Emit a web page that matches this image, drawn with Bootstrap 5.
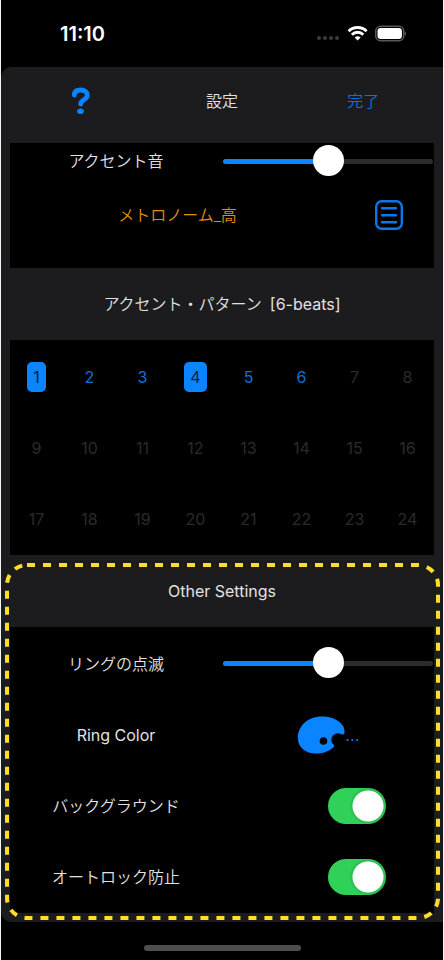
<!DOCTYPE html>
<html lang="ja">
<head>
<meta charset="utf-8">
<meta name="viewport" content="width=device-width, initial-scale=1">
<title>設定</title>
<link href="https://cdn.jsdelivr.net/npm/bootstrap@5.3.0/dist/css/bootstrap.min.css" rel="stylesheet">
<style>
  :root { --tint: #0a84ff; --tint-dim: #0873dd; --sheet: #1c1c1e; --ink: #e2e2e2; }
  body { background: #f4f4f4; font: 400 16px/24px Inter, "Noto Sans CJK JP", sans-serif; color: var(--ink); }
  :lang(ja).jp { font-weight: 350; }
  .phone { background: #000; margin: 0 1px; }
  .status-bar { height: 67px; padding: 0 37px 0 59px; }
  .clock { font-size: 20px; font-weight: 600; color: #fff; }
  .sheet { background: var(--sheet); border-radius: 10px 0 0 10px; padding: 0 9px 9px; }
  .sheet-head { min-height: 68px; margin-bottom: 8px; }
  .panel { background: #000; }
  .panel-accent { padding-bottom: 17px; }
  .line { min-height: 72px; }
  .line-short { min-height: 36px; }
  .section-title { font: inherit; min-height: 72px; }
  .tone-line { grid-template-columns: 79fr 21fr; }
  .tone { color: #e08e0b; }
  .plain { background: none; border: 0; padding: 0; color: var(--tint-dim); line-height: 24px; }
  .beats { grid-template-columns: repeat(8, 1fr); }
  .beats, .panel-others { padding: 1px 0; }
  .beats .line, .panel-others .line { min-height: 71px; }
  .beats .plain:disabled { color: #2b2b2c; }
  .beats .chosen { background: var(--tint); color: #06213f; border-radius: 5px; padding: 3px 6px; }
  .slider { height: 31px; padding: 0 1px; }
  .slider::-webkit-slider-runnable-track { height: 5px; border-radius: 3px; background: linear-gradient(90deg, var(--tint) 50%, #2c2c2e 50%); }
  .slider::-webkit-slider-thumb { width: 31px; height: 31px; margin-top: -14px; background: #fff; border: 0; box-shadow: none; }
  .slider::-moz-range-thumb { width: 31px; height: 31px; background: #fff; border: 0; }
  .toggle-cell { padding-left: 58px; }
  .form-switch .toggle, .form-switch .toggle:checked, .form-switch .toggle:focus {
    width: 58px; height: 36px; margin: 0; border: 0; border-radius: 18px; background-color: #30d158;
    background-image: radial-gradient(circle at 40px 18px, #fff 15px, #2bbd4f 16px, transparent 19px); background-position: 0 0; background-size: 100% 100%;
  }
  .highlight { top: 10px; left: 6px; width: calc(100% - 11px); height: calc(100% - 14px); overflow: visible; pointer-events: none; }
  .others { margin: 0 -9px -9px; padding: 0 9px 9px; }
  .home-area { padding: 23px 0 9px; }
  .home-bar { width: 157px; height: 6px; background: #4d4d4d; border-radius: 3px; }
</style>
<script src="https://cdn.jsdelivr.net/npm/bootstrap@5.3.0/dist/js/bootstrap.bundle.min.js"></script>
</head>
<body>
<div class="phone">
  <div class="status-bar d-flex align-items-center justify-content-between">
    <span class="clock">11:10</span>
    <svg width="90" height="18" viewBox="0 0 90 18" aria-label="Wi-Fi, battery">
      <g fill="#3c3c3d"><circle cx="3" cy="13" r="2"/><circle cx="9" cy="13" r="2"/><circle cx="15" cy="13" r="2"/><circle cx="21" cy="13" r="2"/></g>
      <g fill="none" stroke="#fff" stroke-width="2.900"><path d="M32.600 6.200a12.800 12.800 0 0 1 18 0"/><path d="M35.900 9.700a8 8 0 0 1 11.400 0"/></g>
      <path d="M41.600 15.500l-3-2.900a4.300 4.300 0 0 1 6 0z" fill="#fff"/>
      <rect x="59.700" y="1.300" width="28" height="14.400" rx="4.800" fill="#000" stroke="#59595a" stroke-width="1.500"/>
      <rect x="61.500" y="3.100" width="24.400" height="10.800" rx="3.200" fill="#fff"/>
      <path d="M88.600 6.300q1.600.6 1.600 2.200t-1.600 2.200z" fill="#59595a"/>
    </svg>
  </div>

  <main class="sheet">
    <header class="sheet-head row g-0 align-items-center text-center">
      <div class="col-4 d-flex justify-content-center">
        <button type="button" class="plain" aria-label="ヘルプ">
          <svg class="d-block" width="20" height="28" viewBox="0 0 20 28">
            <path d="M3.300 8C3.500 4.700 6 3 9.700 3c3.900 0 6.600 1.900 6.600 5 0 2.400-1.400 3.500-3.300 4.700-2 1.300-3.300 2.100-3.300 4.200v.2" fill="none" stroke="#0a84ff" stroke-width="4.800" stroke-linecap="round" stroke-linejoin="round"/>
            <ellipse cx="9.500" cy="24.200" rx="3.300" ry="2.800" fill="#0a84ff"/>
          </svg>
        </button>
      </div>
      <h1 class="jp col-4 fs-6 lh-base m-0">設定</h1>
      <div class="col-4"><button type="button" class="plain jp">完了</button></div>
    </header>

    <section class="panel panel-accent">
      <div class="row g-0 line-short align-items-center">
        <label class="jp col-6 text-center" for="accent">アクセント音</label>
        <div class="col-6 d-flex"><input class="form-range slider" type="range" id="accent" min="0" max="100" value="50"></div>
      </div>
      <div class="d-grid tone-line line align-items-center">
        <span class="jp tone text-center">メトロノーム_高</span>
        <button type="button" class="plain d-flex justify-content-center" aria-label="音の一覧">
          <svg width="28" height="30" viewBox="0 0 28 30" fill="none" stroke="#0a78e8" stroke-width="2.400" stroke-linecap="round">
            <rect x="1.200" y="1.200" width="25.600" height="27.600" rx="5.500"/><path d="M7 8.300h14M7 15.300h14M7 22.200h14"/>
          </svg>
        </button>
      </div>
    </section>

    <h2 class="section-title m-0 d-flex align-items-center justify-content-center gap-2"><span class="jp">アクセント・パターン</span><span>[6-beats]</span></h2>

    <section class="panel beats d-grid">
      <div class="line d-flex align-items-center justify-content-center"><button type="button" class="plain chosen">1</button></div>
      <div class="line d-flex align-items-center justify-content-center"><button type="button" class="plain">2</button></div>
      <div class="line d-flex align-items-center justify-content-center"><button type="button" class="plain">3</button></div>
      <div class="line d-flex align-items-center justify-content-center"><button type="button" class="plain chosen">4</button></div>
      <div class="line d-flex align-items-center justify-content-center"><button type="button" class="plain">5</button></div>
      <div class="line d-flex align-items-center justify-content-center"><button type="button" class="plain">6</button></div>
      <div class="line d-flex align-items-center justify-content-center"><button type="button" class="plain" disabled>7</button></div>
      <div class="line d-flex align-items-center justify-content-center"><button type="button" class="plain" disabled>8</button></div>
      <div class="line d-flex align-items-center justify-content-center"><button type="button" class="plain" disabled>9</button></div>
      <div class="line d-flex align-items-center justify-content-center"><button type="button" class="plain" disabled>10</button></div>
      <div class="line d-flex align-items-center justify-content-center"><button type="button" class="plain" disabled>11</button></div>
      <div class="line d-flex align-items-center justify-content-center"><button type="button" class="plain" disabled>12</button></div>
      <div class="line d-flex align-items-center justify-content-center"><button type="button" class="plain" disabled>13</button></div>
      <div class="line d-flex align-items-center justify-content-center"><button type="button" class="plain" disabled>14</button></div>
      <div class="line d-flex align-items-center justify-content-center"><button type="button" class="plain" disabled>15</button></div>
      <div class="line d-flex align-items-center justify-content-center"><button type="button" class="plain" disabled>16</button></div>
      <div class="line d-flex align-items-center justify-content-center"><button type="button" class="plain" disabled>17</button></div>
      <div class="line d-flex align-items-center justify-content-center"><button type="button" class="plain" disabled>18</button></div>
      <div class="line d-flex align-items-center justify-content-center"><button type="button" class="plain" disabled>19</button></div>
      <div class="line d-flex align-items-center justify-content-center"><button type="button" class="plain" disabled>20</button></div>
      <div class="line d-flex align-items-center justify-content-center"><button type="button" class="plain" disabled>21</button></div>
      <div class="line d-flex align-items-center justify-content-center"><button type="button" class="plain" disabled>22</button></div>
      <div class="line d-flex align-items-center justify-content-center"><button type="button" class="plain" disabled>23</button></div>
      <div class="line d-flex align-items-center justify-content-center"><button type="button" class="plain" disabled>24</button></div>
    </section>

    <section class="others position-relative">
      <h2 class="section-title m-0 d-flex align-items-center justify-content-center">Other Settings</h2>
      <div class="panel panel-others">
        <div class="row g-0 line align-items-center">
          <label class="jp col-6 text-center" for="ring">リングの点滅</label>
          <div class="col-6 d-flex"><input class="form-range slider" type="range" id="ring" min="0" max="100" value="50"></div>
        </div>
        <div class="row g-0 line align-items-center">
          <span class="col-6 text-center">Ring Color</span>
          <div class="col-6 d-flex justify-content-center">
            <button type="button" class="plain" aria-label="Ring Color">
              <svg class="d-block" width="62" height="38" viewBox="0 0 62 38" fill="#0a84ff">
                <path fill-rule="evenodd" d="M25 .6C10 .6 .8 10.800 .8 21.800.8 31.500 8.500 37.600 19 37.600c7 0 13-2.300 17.300-6.100 1.400-1.300 1.200-2.300.1-3.200-3.200-2.500-2.600-8.300 1.500-10.300 2.200-1.100 4.500-.7 6.400.2 1.600.8 2.800.4 3.100-1C49.100 8.500 38.500.6 25 .6ZM26.500 21.200a3.800 3.800 0 1 1 0 7.600 3.800 3.800 0 0 1 0-7.600Z"/>
                <circle cx="50.500" cy="24" r="1.100"/><circle cx="55.300" cy="24" r="1.100"/><circle cx="60" cy="24" r="1.100"/>
              </svg>
            </button>
          </div>
        </div>
        <div class="row g-0 line align-items-center">
          <label class="jp col-6 text-center" for="background">バックグラウンド</label>
          <div class="col-6 toggle-cell form-switch d-flex justify-content-center"><input class="form-check-input toggle" type="checkbox" role="switch" id="background" checked></div>
        </div>
        <div class="row g-0 line align-items-center">
          <label class="jp col-6 text-center" for="autolock">オートロック防止</label>
          <div class="col-6 toggle-cell form-switch d-flex justify-content-center"><input class="form-check-input toggle" type="checkbox" role="switch" id="autolock" checked></div>
        </div>
      </div>
      <svg class="highlight position-absolute" aria-hidden="true"><rect width="100%" height="100%" rx="20" fill="none" stroke="#ffde2b" stroke-width="4" stroke-dasharray="8 8"/></svg>
    </section>
  </main>

  <div class="home-area d-flex justify-content-center"><div class="home-bar"></div></div>
</div>
</body>
</html>
